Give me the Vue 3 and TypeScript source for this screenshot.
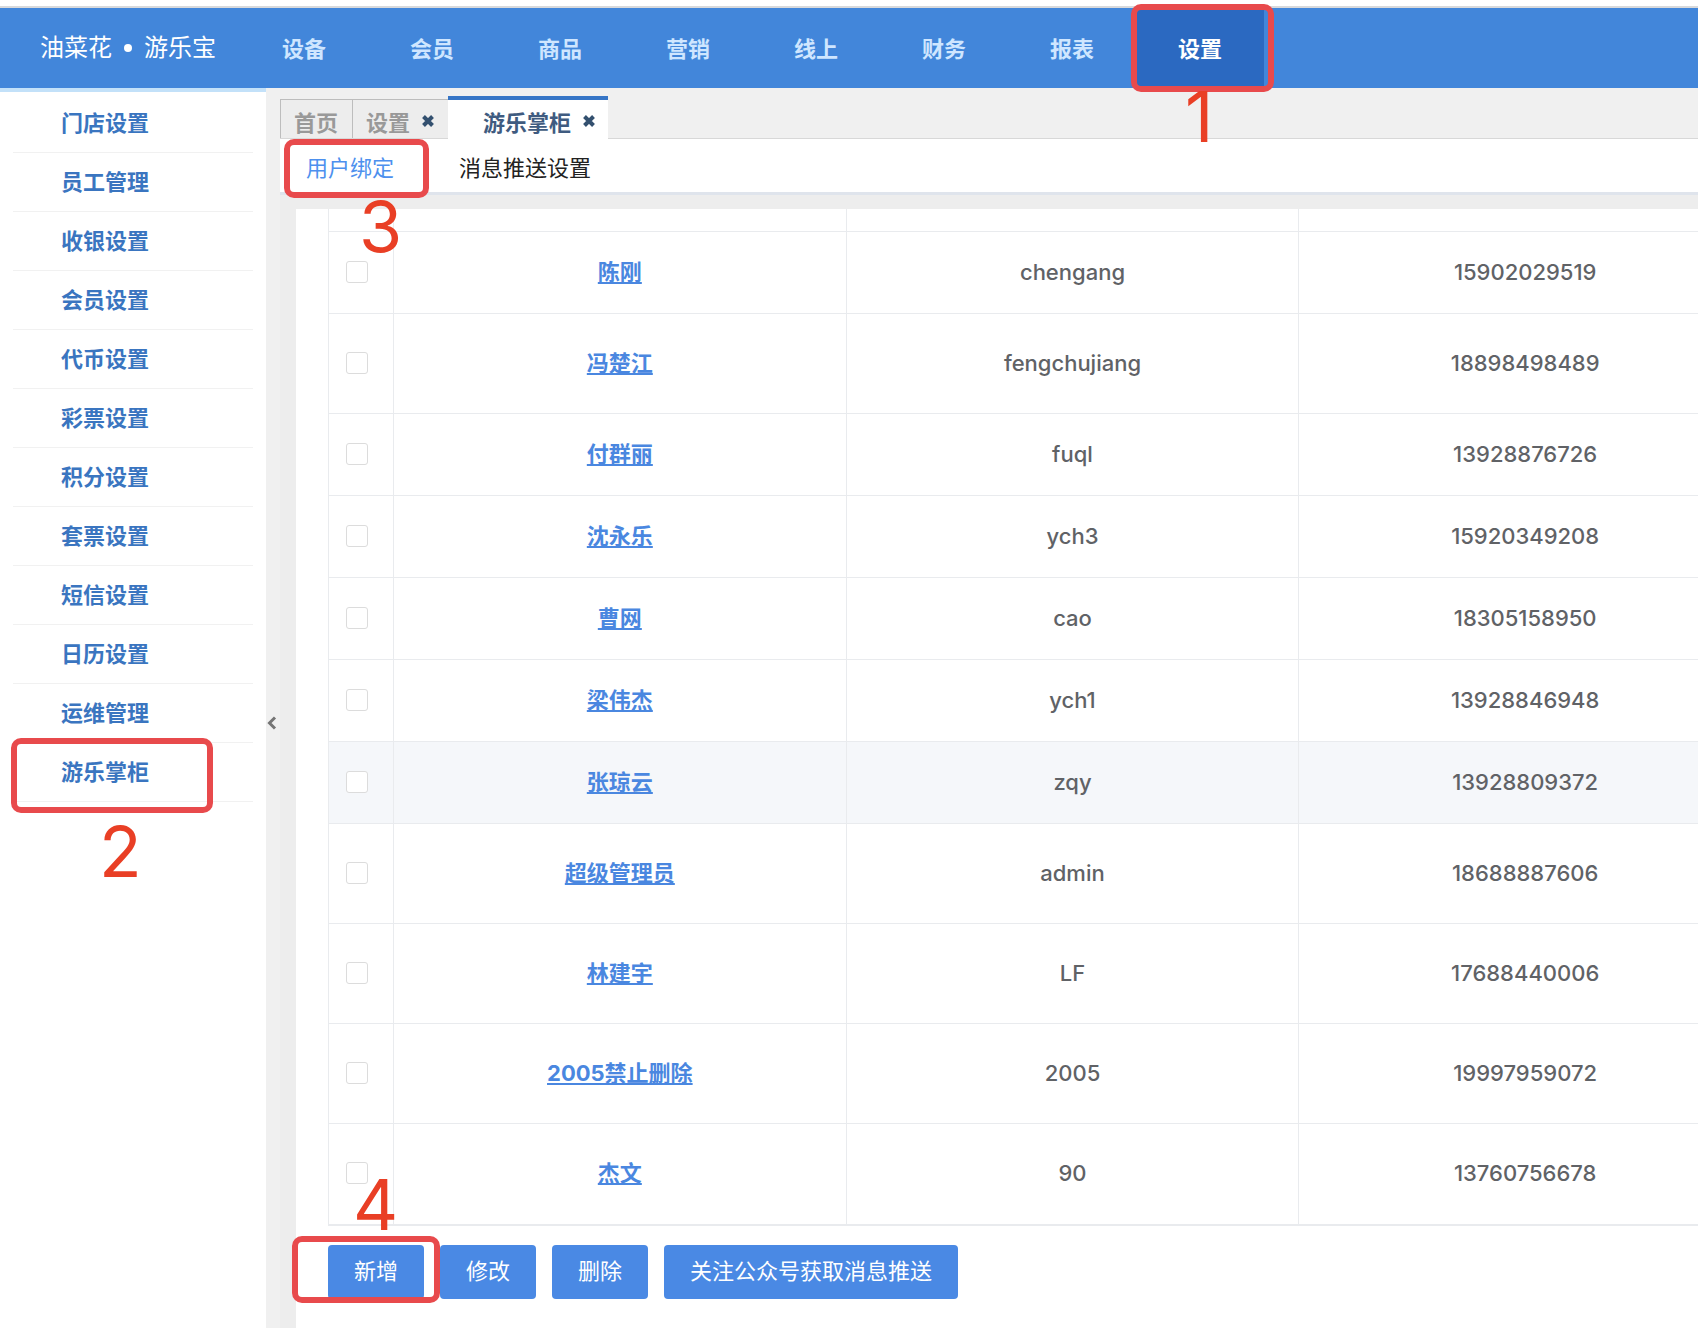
<script setup lang="ts">
import { ref } from 'vue'

interface Member {
  name: string
  account: string
  phone: string
  tall?: boolean
}

const modules: string[] = ['设备', '会员', '商品', '营销', '线上', '财务', '报表', '设置']
const activeModule = ref('设置')

const menu: string[] = [
  '门店设置', '员工管理', '收银设置', '会员设置', '代币设置', '彩票设置',
  '积分设置', '套票设置', '短信设置', '日历设置', '运维管理', '游乐掌柜',
]

const members: Member[] = [
  { name: '陈刚', account: 'chengang', phone: '15902029519' },
  { name: '冯楚江', account: 'fengchujiang', phone: '18898498489', tall: true },
  { name: '付群丽', account: 'fuql', phone: '13928876726' },
  { name: '沈永乐', account: 'ych3', phone: '15920349208' },
  { name: '曹网', account: 'cao', phone: '18305158950' },
  { name: '梁伟杰', account: 'ych1', phone: '13928846948' },
  { name: '张琼云', account: 'zqy', phone: '13928809372' },
  { name: '超级管理员', account: 'admin', phone: '18688887606', tall: true },
  { name: '林建宇', account: 'LF', phone: '17688440006', tall: true },
  { name: '2005禁止删除', account: '2005', phone: '19997959072', tall: true },
  { name: '杰文', account: '90', phone: '13760756678', tall: true },
]
const hovered = ref('zqy')
const selected = ref<string[]>([])
</script>

<template>
  <div class="page">
    <header class="topbar">
      <div class="logo"><span>油菜花</span><i class="dot"></i><span>游乐宝</span></div>
      <nav class="modules">
        <a
          v-for="m in modules"
          :key="m"
          href="#"
          :class="['module', { active: m === activeModule }]"
          @click.prevent="activeModule = m"
        >
          {{ m }}
          <template v-if="m === '设置'">
            <span class="mark mark-module"></span>
            <span class="step step-module">1</span>
          </template>
        </a>
      </nav>
    </header>

    <div class="body">
      <aside class="sidebar">
        <ul class="menu">
          <li v-for="item in menu" :key="item">
            <a href="#">{{ item }}</a>
            <template v-if="item === '游乐掌柜'">
              <span class="mark mark-menu"></span>
              <span class="step step-menu">2</span>
            </template>
          </li>
        </ul>
      </aside>

      <button class="collapse" aria-label="收起菜单">
        <svg width="10" height="14" viewBox="0 0 10 14"><path d="M8 1.5 2.5 7 8 12.5" fill="none" stroke="#757575" stroke-width="3" /></svg>
      </button>

      <main class="main">
        <div class="tabs">
          <div class="tab"><button class="tab-name">首页</button></div>
          <div class="tab">
            <button class="tab-name">设置</button>
            <button class="close" aria-label="关闭设置">
              <svg width="12" height="12" viewBox="0 0 12 12"><path d="M1.5 1.5l9 9M10.5 1.5l-9 9" stroke="#33506f" stroke-width="4" /></svg>
            </button>
          </div>
          <div class="tab current">
            <button class="tab-name">游乐掌柜</button>
            <button class="close" aria-label="关闭游乐掌柜">
              <svg width="12" height="12" viewBox="0 0 12 12"><path d="M1.5 1.5l9 9M10.5 1.5l-9 9" stroke="#33506f" stroke-width="4" /></svg>
            </button>
          </div>
        </div>

        <nav class="subnav">
          <a href="#" class="on">用户绑定</a>
          <a href="#">消息推送设置</a>
          <span class="mark mark-subnav"></span>
          <span class="step step-subnav">3</span>
        </nav>

        <section class="panel">
          <div class="table-wrap">
            <table>
              <colgroup><col class="check-col" /><col /><col /><col /></colgroup>
              <tbody>
                <tr class="cut"><td></td><td></td><td></td><td></td></tr>
                <tr
                  v-for="p in members"
                  :key="p.account"
                  :class="{ tall: p.tall, hover: hovered === p.account }"
                  @mouseenter="hovered = p.account"
                >
                  <td class="check-cell"><input v-model="selected" type="checkbox" :value="p.account" :aria-label="p.name" /></td>
                  <td><a href="#">{{ p.name }}</a></td>
                  <td>{{ p.account }}</td>
                  <td>{{ p.phone }}</td>
                </tr>
              </tbody>
            </table>
          </div>
          <div class="actions">
            <button>新增</button>
            <button>修改</button>
            <button>删除</button>
            <button>关注公众号获取消息推送</button>
            <span class="mark mark-add"></span>
            <span class="step step-add">4</span>
          </div>
        </section>
      </main>
    </div>
  </div>
</template>

<style>
body {
  margin: 0;
}
</style>

<style scoped>
.page {
  min-height: 100vh;
  box-sizing: border-box;
  padding-top: 6px;
  display: flex;
  flex-direction: column;
  background: #fff;
  font-family: Inter, "Noto Sans CJK SC", sans-serif;
  font-size: 22px;
  line-height: 32px;
  overflow-x: hidden;
}
a {
  text-decoration: none;
}
button {
  font: inherit;
  border: 0;
  padding: 0;
  background: none;
  cursor: pointer;
}
svg {
  display: block;
}

.topbar {
  display: flex;
  height: 80px;
  border-top: 2px solid #d8d9db;
  background: #4286da;
}
.logo {
  flex: none;
  width: 200px;
  padding-left: 40px;
  display: flex;
  align-items: center;
  font-size: 24px;
  color: #fff;
}
.dot {
  width: 8px;
  height: 8px;
  margin: 0 12px;
  border-radius: 50%;
  background: #fff;
}
.modules {
  display: flex;
}
.module {
  position: relative;
  width: 128px;
  box-sizing: border-box;
  padding-top: 2px;
  line-height: 78px;
  text-align: center;
  font-weight: 700;
  color: #cfe6ff;
}
.module.active {
  background: #2b69c1;
  color: #fff;
}

.body {
  flex: 1;
  display: flex;
}
.sidebar {
  flex: none;
  width: 266px;
  box-sizing: border-box;
  border-top: 4px solid #c3e1f9;
}
.menu {
  list-style: none;
  margin: 0;
  padding: 2px 13px 0;
}
.menu li {
  position: relative;
  height: 58px;
  border-bottom: 1px solid #f1f1f1;
}
.menu a {
  display: block;
  padding-left: 48px;
  line-height: 58px;
  font-weight: 700;
  color: #3a75c0;
}
.collapse {
  flex: none;
  width: 14px;
  padding: 30px 0 0 1px;
  display: flex;
  align-items: center;
  background: #f0f0f0;
}

.main {
  flex: 1;
  min-width: 0;
  display: flex;
  flex-direction: column;
  background: #ededed;
}
.tabs {
  display: flex;
  align-items: flex-end;
  height: 50px;
  background: #f0f0f0;
  border-bottom: 1px solid #d8d8d8;
}
.tab {
  display: flex;
  align-items: center;
  height: 39px;
  box-sizing: border-box;
  padding: 8px 14px 0 13px;
  border: 1px solid #bdbdbd;
  border-width: 1px 0 0 1px;
  background: #ededed;
  color: #999;
  font-weight: 700;
  line-height: 28px;
}
.tab-name {
  color: inherit;
}
.close {
  margin-left: 12px;
  padding-bottom: 4px;
}
.tab.current {
  height: 43px;
  margin-bottom: -1px;
  padding: 6px 13px 0 35px;
  border: 0;
  border-top: 4px solid #3675c6;
  background: #fff;
  color: #3f5b80;
}
.subnav {
  position: relative;
  display: flex;
  gap: 65px;
  height: 53px;
  padding-left: 26px;
  background: #fff;
  border-bottom: 3px solid #dfe4ec;
  line-height: 58px;
}
.subnav a {
  color: #222;
}
.subnav .on {
  color: #4d90ee;
}

.panel {
  flex: 1;
  margin: 14px 0 0 16px;
  padding-left: 32px;
  background: #fff;
}
.table-wrap {
  overflow: hidden;
}
table {
  width: calc(100% + 54px);
  table-layout: fixed;
  border-spacing: 0;
  border: solid #e9ebee;
  border-width: 0 0 2px 1px;
  color: #606266;
  font-size: 22px;
  font-weight: 500;
}
.check-col {
  width: 65px;
}
td {
  height: 82px;
  box-sizing: border-box;
  padding: 0 0 2px;
  border: solid #e9ebee;
  border-width: 0 1px 1px 0;
  text-align: center;
}
.cut td {
  height: 23px;
}
.tall td {
  height: 100px;
}
.tall:last-child td {
  border-bottom: 0;
}
.hover td {
  background: #f5f7fa;
}
td a {
  color: #4a87e0;
  font-weight: 700;
  text-decoration: underline;
  text-decoration-thickness: 2px;
  text-underline-offset: 2px;
}
.check-cell {
  padding-right: 8px;
}
td input {
  appearance: none;
  display: block;
  width: 22px;
  height: 22px;
  margin: 0 auto;
  border: 1px solid #dcdcdc;
  border-radius: 3px;
  background: #fff;
}
td input:checked {
  background: #4a89e4;
}
.actions {
  position: relative;
  display: flex;
  gap: 16px;
  padding-top: 19px;
}
.actions button {
  height: 54px;
  padding: 0 26px 2px;
  border-radius: 4px;
  background: #4a89e4;
  color: #fff;
}

/* walkthrough frames and step numbers */
.mark {
  position: absolute;
  z-index: 2;
  border: 6px solid #e84a4c;
  border-radius: 10px;
  pointer-events: none;
}
.step {
  position: absolute;
  z-index: 3;
  font-size: 70px;
  font-weight: 400;
  line-height: 70px;
  color: #e93f25;
  pointer-events: none;
}
.mark-module {
  inset: -4px -10px -4px -5px;
}
.step-module {
  left: 49px;
  top: 74px;
}
.mark-menu {
  inset: -5px 40px -12px -2px;
}
.step-menu {
  left: 86px;
  top: 74px;
}
.mark-subnav {
  left: 4px;
  top: 0;
  width: 133px;
  height: 47px;
}
.step-subnav {
  left: 79px;
  top: 53px;
}
.mark-add {
  left: -36px;
  top: 10px;
  width: 136px;
  height: 55px;
}
.step-add {
  left: 25px;
  top: -56px;
}
</style>
